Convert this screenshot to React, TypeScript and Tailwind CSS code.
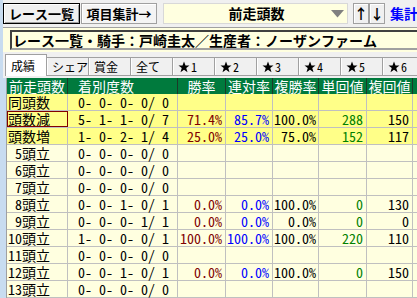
import React from 'react';

type Row = {
  label: string;
  count: string;
  hi?: boolean;
  sel?: boolean;
  win?: string;
  ren?: string;
  fuku?: string;
  tan?: string;
  fk?: string;
};

const rows: Row[] = [
  { label: '同頭数', hi: true, count: '0- 0- 0- 0/ 0' },
  { label: '頭数減', hi: true, sel: true, count: '5- 1- 1- 0/ 7', win: '71.4%', ren: '85.7%', fuku: '100.0%', tan: '288', fk: '150' },
  { label: '頭数増', hi: true, count: '1- 0- 2- 1/ 4', win: '25.0%', ren: '25.0%', fuku: '75.0%', tan: '152', fk: '117' },
  { label: ' 5頭立', count: '0- 0- 0- 0/ 0' },
  { label: ' 6頭立', count: '0- 0- 0- 0/ 0' },
  { label: ' 7頭立', count: '0- 0- 0- 0/ 0' },
  { label: ' 8頭立', count: '0- 0- 1- 0/ 1', win: '0.0%', ren: '0.0%', fuku: '100.0%', tan: '0', fk: '130' },
  { label: ' 9頭立', count: '0- 0- 0- 1/ 1', win: '0.0%', ren: '0.0%', fuku: '0.0%', tan: '0', fk: '0' },
  { label: '10頭立', count: '1- 0- 0- 0/ 1', win: '100.0%', ren: '100.0%', fuku: '100.0%', tan: '220', fk: '110' },
  { label: '11頭立', count: '0- 0- 0- 0/ 0' },
  { label: '12頭立', count: '0- 0- 1- 0/ 1', win: '0.0%', ren: '0.0%', fuku: '100.0%', tan: '0', fk: '150' },
  { label: '13頭立', count: '0- 0- 0- 0/ 0' },
];

const tabs = ['成績', 'シェア', '賞金', '全て', '1', '2', '3', '4', '5', '6'];

const headers = [
  { label: '前走頭数', w: 'w-[61px]', align: 'justify-center' },
  { label: '着別度数', w: 'w-[110px]', align: 'justify-start pl-[10px]' },
  { label: '勝率', w: 'w-[48px]', align: 'justify-center' },
  { label: '連対率', w: 'w-[47px]', align: 'justify-center' },
  { label: '複勝率', w: 'w-[46px]', align: 'justify-center' },
  { label: '単回値', w: 'w-[48px]', align: 'justify-center' },
  { label: '複回値', w: 'w-[46px]', align: 'justify-center' },
  { label: '単', w: 'w-[46px]', align: 'justify-center' },
];

const cell = 'h-full shrink-0 flex items-center border-r border-[#c0c0c0] whitespace-pre';
const btn = 'h-[21px] shrink-0 flex items-center justify-center whitespace-nowrap overflow-hidden';

function Star() {
  return (
    <svg width="12" height="12" viewBox="0 0 24 24" className="mr-[1px] shrink-0">
      <polygon points="12,1 15,9 23,9 16.5,14 19,22.5 12,17.5 5,22.5 7.5,14 1,9 9,9" fill="#000" />
    </svg>
  );
}

export default function App() {
  return (
    <div className="w-[417px] h-[298px] overflow-hidden bg-[#c8dcf0] pl-[3px] flex flex-col text-[14px] leading-[15px] text-black font-['Noto_Sans_Mono_CJK_JP','Noto_Sans_CJK_JP',monospace]">
      {/* top toolbar */}
      <div className="h-[28px] shrink-0 bg-[#f0f0f0] border-b border-[#a0a0a0] flex items-start pt-[3px] font-bold">
        <button className={`${btn} w-[77px] border border-black bg-[#f0f0f0] shadow-[inset_1px_1px_0_#fff,inset_-1px_-1px_0_#a0a0a0] text-[13px]`}>
          レース一覧
        </button>
        <button className={`${btn} ml-px w-[76px] border border-[#a0a0a0] bg-[#f4f4f4] shadow-[inset_1px_1px_0_#fff] text-[13px]`}>
          項目集計→
        </button>
        <div className="ml-[6px] w-[185px] h-[21px] shrink-0 border border-[#d8d8d8] bg-[#ffffe0] flex items-center relative">
          <span className="flex-1 text-center pl-[2px]">前走頭数</span>
          <svg className="absolute right-[3px] top-[6px]" width="13" height="8" viewBox="0 0 13 8">
            <polygon points="0,0 13,0 6.5,7.5" fill="#808080" />
          </svg>
        </div>
        <button className={`${btn} ml-[5px] w-[16px] border border-[#a0a0a0] bg-[#f0f0f0] shadow-[inset_1px_1px_0_#fff]`}>
          ↑
        </button>
        <button className={`${btn} w-[16px] border border-[#a0a0a0] bg-[#f0f0f0] shadow-[inset_1px_1px_0_#fff]`}>
          ↓
        </button>
        <span className="ml-[5px] h-[21px] flex items-center text-[#0000ff] whitespace-nowrap">集計表示</span>
      </div>

      {/* title */}
      <div className="h-[24px] shrink-0 bg-[#ffffe0] pl-[7px] pt-[2px] overflow-hidden">
        <div className="w-[500px] h-[20px] border-2 border-t-[#404040] border-l-[#404040] border-r-[#808080] border-b-[#a0a0a0] flex items-center pl-[1px] font-bold whitespace-nowrap">
          レース一覧・騎手：戸崎圭太／生産者：ノーザンファーム
        </div>
      </div>

      {/* tabs */}
      <div className="h-[26px] shrink-0 bg-[#f0f0f0] pl-[2px] flex flex-col text-[12px]">
        <div className="flex items-end h-[22px] mt-[2px] border-b border-[#a0a0a0] w-full">
          {tabs.map((t, i) =>
            i === 0 ? (
              <div
                key={t}
                className="w-[42px] h-[22px] -mb-px shrink-0 bg-white border border-b-0 border-[#a0a0a0] flex items-start pt-[3px] pl-[5px] whitespace-nowrap"
              >
                {t}
              </div>
            ) : (
              <div
                key={t}
                className="w-[42px] h-[18px] shrink-0 bg-[#f0f0f0] border-t border-r border-[#a0a0a0] shadow-[inset_1px_0_0_#fff] flex items-center pl-[5px] whitespace-nowrap"
              >
                {i >= 4 && <Star />}
                {t}
              </div>
            )
          )}
        </div>
      </div>

      {/* grid */}
      <div className="flex-1 pl-[3px]">
        <div className="border-l border-[#a0a0a0] h-full bg-[#f8f8f8]">
          <div className="h-[16px] flex bg-[#007a3d] text-white">
            {headers.map((h) => (
              <div key={h.label} className={`${h.w} h-full shrink-0 flex items-center border-r border-[#1c3a28] whitespace-nowrap ${h.align}`}>
                {h.label}
              </div>
            ))}
          </div>
          {rows.map((r) => (
            <div
              key={r.label}
              className={`h-[17px] flex border-b border-[#c0c0c0] ${r.hi ? 'bg-[#ffff88]' : 'bg-[#ffffe0]'}`}
            >
              <div className={`${cell} w-[61px] pl-[1px] ${r.sel ? 'outline outline-1 -outline-offset-1 outline-[#800000]' : ''}`}>
                {r.label}
              </div>
              <div className={`${cell} w-[110px] pl-[10px]`}>{r.count}</div>
              <div className={`${cell} w-[48px] justify-end pr-[3px] text-[#800000]`}>{r.win}</div>
              <div className={`${cell} w-[47px] justify-end pr-[3px] text-[#0000ff]`}>{r.ren}</div>
              <div className={`${cell} w-[46px] justify-end pr-[2px]`}>{r.fuku}</div>
              <div className={`${cell} w-[48px] justify-end pr-[3px] text-[#008000]`}>{r.tan}</div>
              <div className={`${cell} w-[46px] justify-end pr-[3px]`}>{r.fk}</div>
              <div className={`${cell} w-[46px]`} />
            </div>
          ))}
        </div>
      </div>
    </div>
  );
}
